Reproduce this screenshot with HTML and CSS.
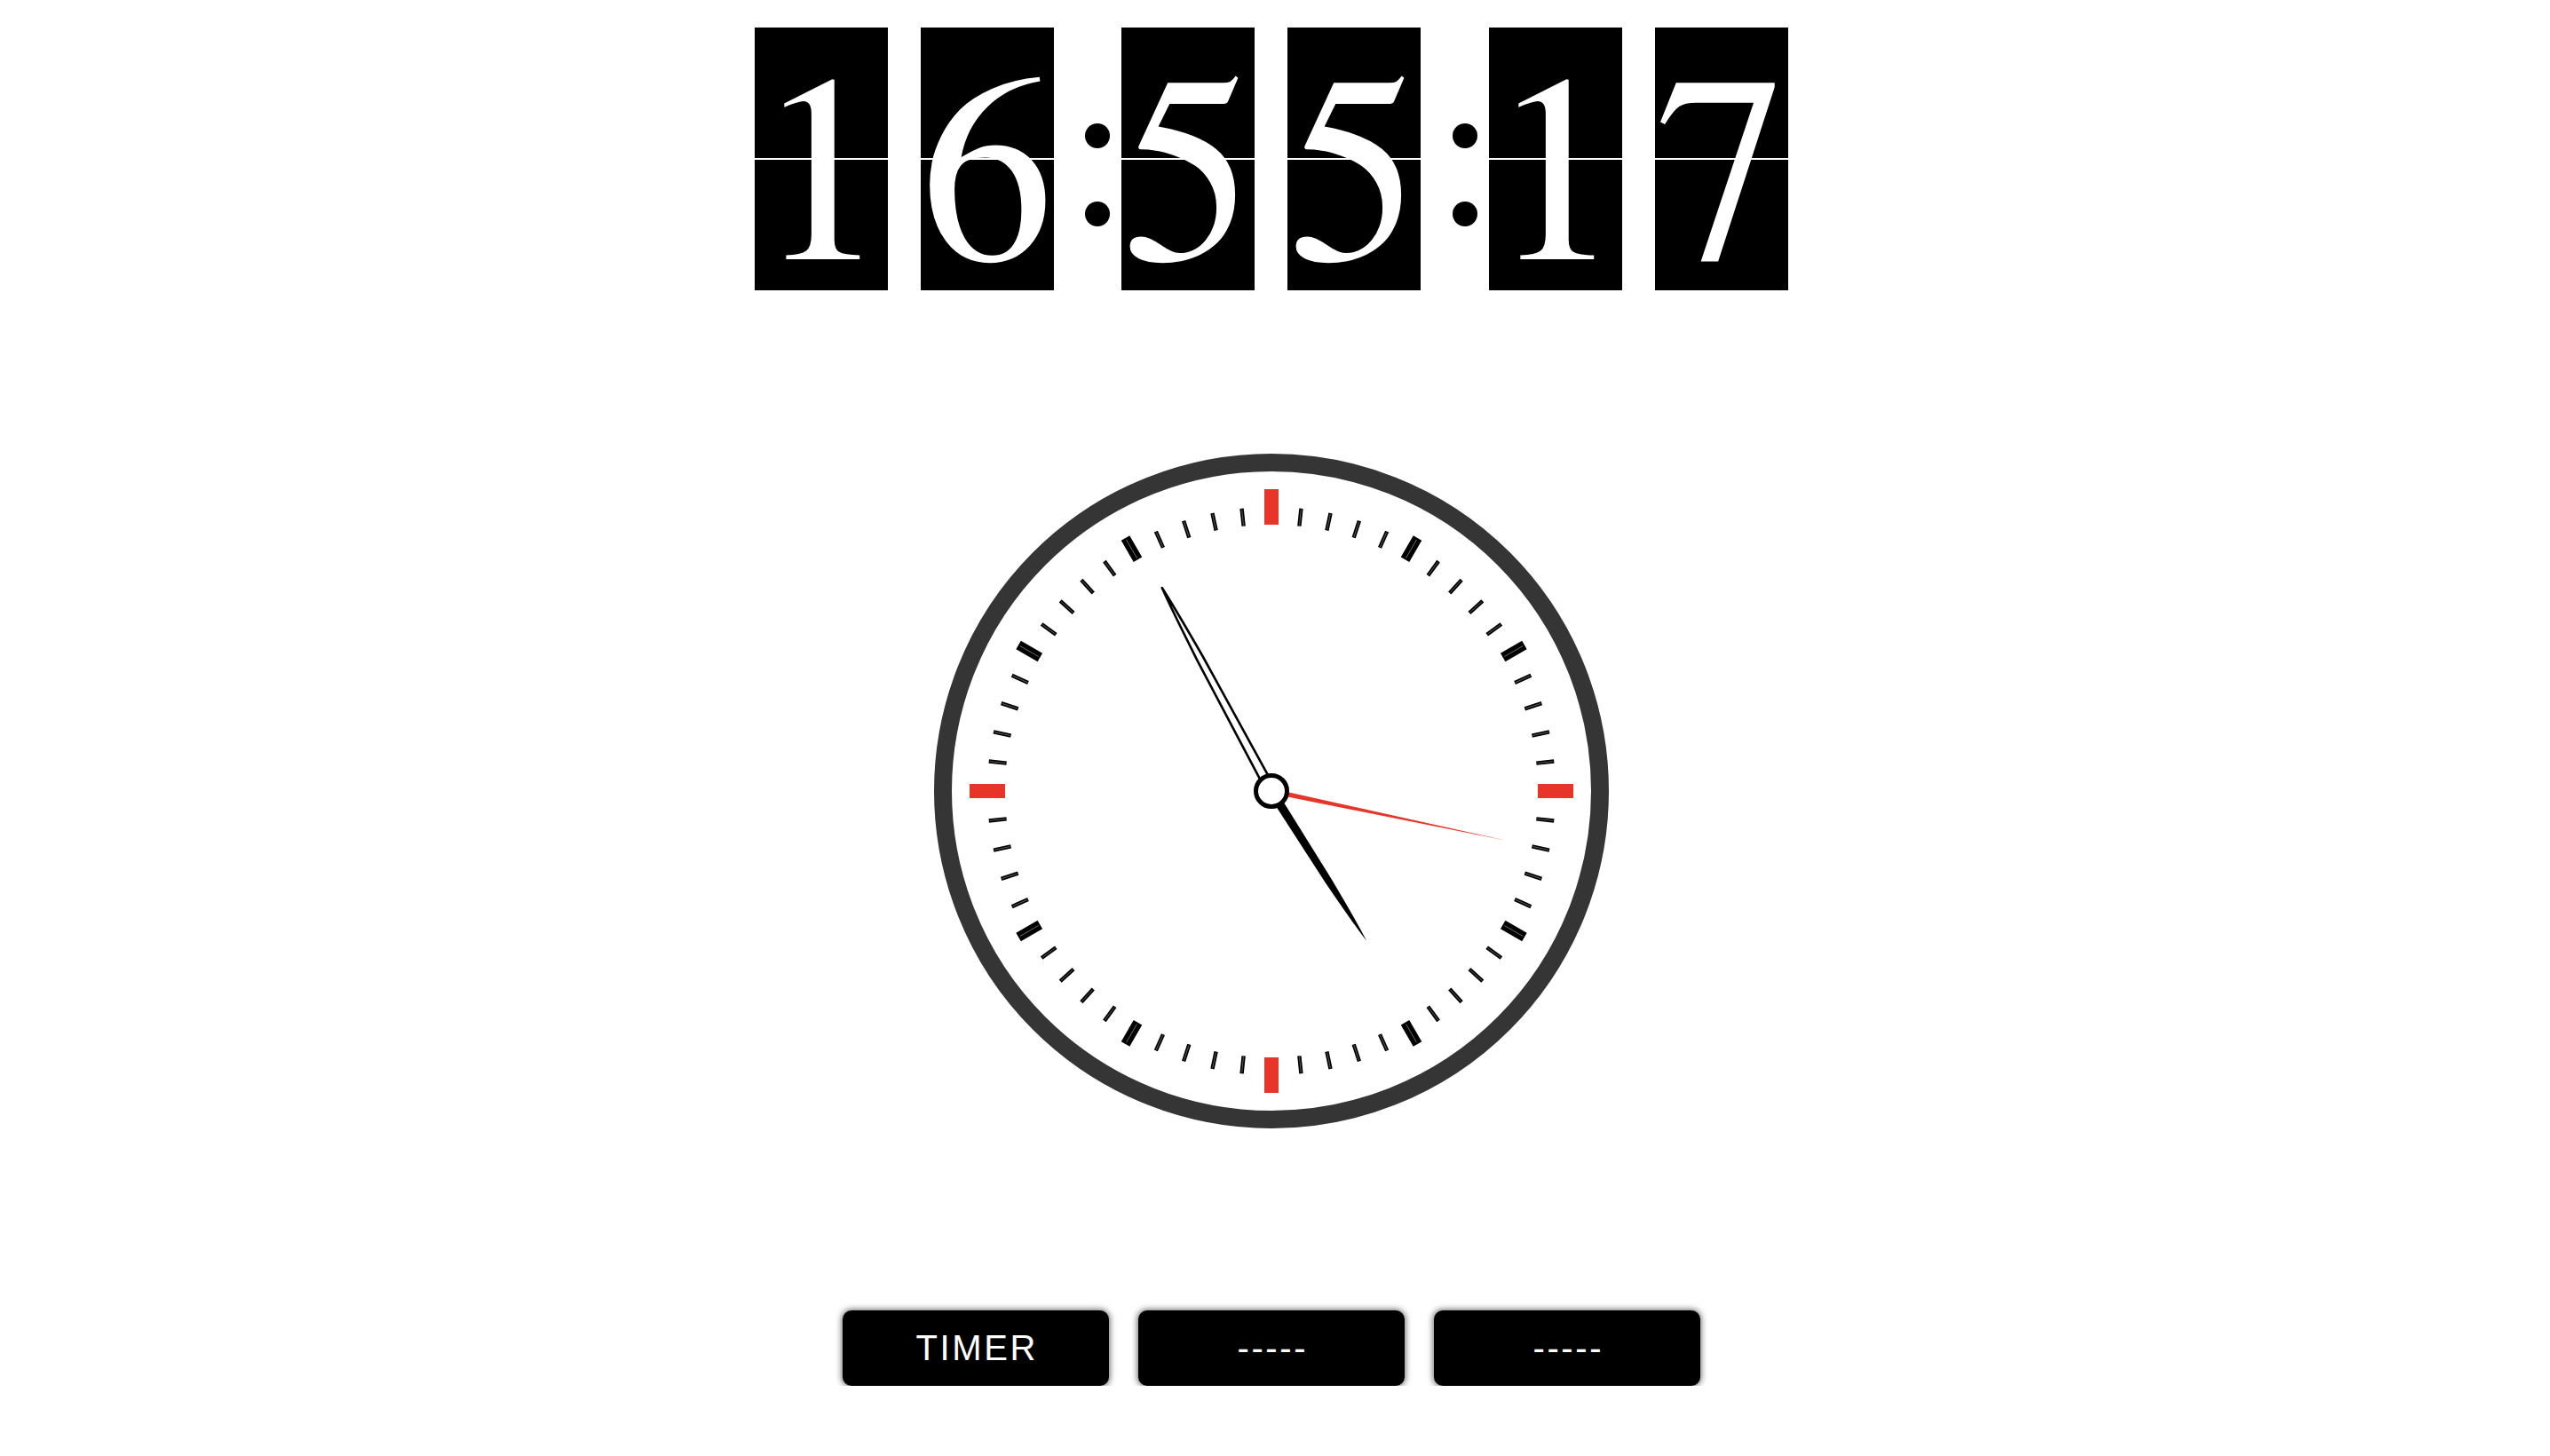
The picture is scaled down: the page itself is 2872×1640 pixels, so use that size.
FILE: index.html
```html
<!DOCTYPE html>
<html lang="en">
<head>
<meta charset="utf-8">
<title>Clock</title>
<link rel="stylesheet" href="styles.css">
</head>
<body>
<main class="page">
  <div class="flip">
    <div class="pair">
      <div class="digit">1</div>
      <div class="digit">6</div>
    </div>
    <div class="colon" aria-label=":"><span class="dot"></span><span class="dot"></span></div>
    <div class="pair">
      <div class="digit">5</div>
      <div class="digit">5</div>
    </div>
    <div class="colon colon-wide" aria-label=":"><span class="dot"></span><span class="dot"></span></div>
    <div class="pair">
      <div class="digit">1</div>
      <div class="digit">7</div>
    </div>
  </div>

  <svg class="clock" width="760" height="760" viewBox="-380 -380 760 760">
    <defs>
      <g id="tk">
        <rect x="-2.2" y="-320" width="4.4" height="20" fill="#000"/>
        <line x1="0" y1="-319" x2="0" y2="-301" stroke="#777" stroke-width="0.7"/>
      </g>
      <g id="hr">
        <rect x="-5.5" y="-329" width="11" height="28" fill="#000"/>
        <line x1="0" y1="-327" x2="0" y2="-303" stroke="#888" stroke-width="0.7"/>
      </g>
      <rect id="rd" x="-8" y="-340" width="16" height="40" fill="#e8352a"/>
    </defs>
    <circle cx="0" cy="0" r="370" fill="#fff" stroke="#353535" stroke-width="20"/>

    <use href="#rd" transform="rotate(0)"/>
    <use href="#tk" transform="rotate(6)"/>
    <use href="#tk" transform="rotate(12)"/>
    <use href="#tk" transform="rotate(18)"/>
    <use href="#tk" transform="rotate(24)"/>
    <use href="#hr" transform="rotate(30)"/>
    <use href="#tk" transform="rotate(36)"/>
    <use href="#tk" transform="rotate(42)"/>
    <use href="#tk" transform="rotate(48)"/>
    <use href="#tk" transform="rotate(54)"/>
    <use href="#hr" transform="rotate(60)"/>
    <use href="#tk" transform="rotate(66)"/>
    <use href="#tk" transform="rotate(72)"/>
    <use href="#tk" transform="rotate(78)"/>
    <use href="#tk" transform="rotate(84)"/>
    <use href="#rd" transform="rotate(90)"/>
    <use href="#tk" transform="rotate(96)"/>
    <use href="#tk" transform="rotate(102)"/>
    <use href="#tk" transform="rotate(108)"/>
    <use href="#tk" transform="rotate(114)"/>
    <use href="#hr" transform="rotate(120)"/>
    <use href="#tk" transform="rotate(126)"/>
    <use href="#tk" transform="rotate(132)"/>
    <use href="#tk" transform="rotate(138)"/>
    <use href="#tk" transform="rotate(144)"/>
    <use href="#hr" transform="rotate(150)"/>
    <use href="#tk" transform="rotate(156)"/>
    <use href="#tk" transform="rotate(162)"/>
    <use href="#tk" transform="rotate(168)"/>
    <use href="#tk" transform="rotate(174)"/>
    <use href="#rd" transform="rotate(180)"/>
    <use href="#tk" transform="rotate(186)"/>
    <use href="#tk" transform="rotate(192)"/>
    <use href="#tk" transform="rotate(198)"/>
    <use href="#tk" transform="rotate(204)"/>
    <use href="#hr" transform="rotate(210)"/>
    <use href="#tk" transform="rotate(216)"/>
    <use href="#tk" transform="rotate(222)"/>
    <use href="#tk" transform="rotate(228)"/>
    <use href="#tk" transform="rotate(234)"/>
    <use href="#hr" transform="rotate(240)"/>
    <use href="#tk" transform="rotate(246)"/>
    <use href="#tk" transform="rotate(252)"/>
    <use href="#tk" transform="rotate(258)"/>
    <use href="#tk" transform="rotate(264)"/>
    <use href="#rd" transform="rotate(270)"/>
    <use href="#tk" transform="rotate(276)"/>
    <use href="#tk" transform="rotate(282)"/>
    <use href="#tk" transform="rotate(288)"/>
    <use href="#tk" transform="rotate(294)"/>
    <use href="#hr" transform="rotate(300)"/>
    <use href="#tk" transform="rotate(306)"/>
    <use href="#tk" transform="rotate(312)"/>
    <use href="#tk" transform="rotate(318)"/>
    <use href="#tk" transform="rotate(324)"/>
    <use href="#hr" transform="rotate(330)"/>
    <use href="#tk" transform="rotate(336)"/>
    <use href="#tk" transform="rotate(342)"/>
    <use href="#tk" transform="rotate(348)"/>
    <use href="#tk" transform="rotate(354)"/>

    <path class="hand-hour" d="M -5 0 L -4 -120 Q -2.2 -178 0 -200 Q 2.2 -178 4 -120 L 5 0 Z" transform="rotate(147.6)"/>
    <path class="hand-minute" d="M -5.2 0 L -3.8 -170 Q -1.9 -235 0 -260 Q 1.9 -235 3.8 -170 L 5.2 0 Z" transform="rotate(331.7)"/>
    <path class="hand-second" d="M -2.8 0 L 0 -270 L 2.8 0 Z" transform="rotate(101.9)"/>
    <circle class="hub" cx="0" cy="0" r="17.5"/>
  </svg>

  <div class="buttons">
    <button class="btn" type="button">TIMER</button>
    <button class="btn" type="button">-----</button>
    <button class="btn" type="button">-----</button>
  </div>
</main>
</body>
</html>
```

FILE: styles.css
```css
html, body {
  margin: 0;
  padding: 0;
  background: #fff;
}

.page {
  width: 2864px;
  display: flex;
  flex-direction: column;
  align-items: center;
}

.flip {
  margin-top: 31px;
  display: flex;
  align-items: flex-start;
  height: 296px;
}

.pair {
  display: flex;
  gap: 37px;
}

.digit {
  position: relative;
  box-sizing: border-box;
  width: 150px;
  height: 296px;
  padding-top: 46px;
  overflow: hidden;
  background: #000;
  color: #fff;
  font-family: FreeSerif, "Liberation Serif", "Times New Roman", serif;
  font-size: 300px;
  line-height: 250px;
  text-align: center;
  white-space: nowrap;
}

.digit::after {
  content: "";
  position: absolute;
  left: 0;
  right: 0;
  top: 147px;
  height: 2px;
  background: #fff;
}

.colon {
  width: 76px;
  box-sizing: border-box;
  padding-left: 35px;
  padding-top: 108px;
  display: flex;
  flex-direction: column;
  gap: 60px;
}

.colon-wide {
  width: 77px;
  padding-left: 36px;
}

.dot {
  display: block;
  width: 28px;
  height: 28px;
  border-radius: 50%;
  background: #000;
}

.clock {
  display: block;
  margin-top: 184px;
}

.hand-hour {
  fill: #000;
}

.hand-minute {
  fill: #fff;
  stroke: #000;
  stroke-width: 2.6;
  stroke-linejoin: round;
}

.hand-second {
  fill: #e8352a;
}

.hub {
  fill: #fff;
  stroke: #000;
  stroke-width: 5;
}

.buttons {
  margin-top: 205px;
  display: flex;
  gap: 33px;
}

.btn {
  width: 300px;
  height: 85px;
  margin: 0;
  padding: 0;
  border: none;
  border-radius: 10px;
  background: #000;
  color: #fff;
  font-family: "Liberation Sans", Arial, sans-serif;
  font-size: 40px;
  letter-spacing: 2.6px;
  text-indent: 2.6px;
  box-shadow: 0 0 7px 1px rgba(0, 0, 0, 0.6);
  display: flex;
  align-items: center;
  justify-content: center;
}
```
